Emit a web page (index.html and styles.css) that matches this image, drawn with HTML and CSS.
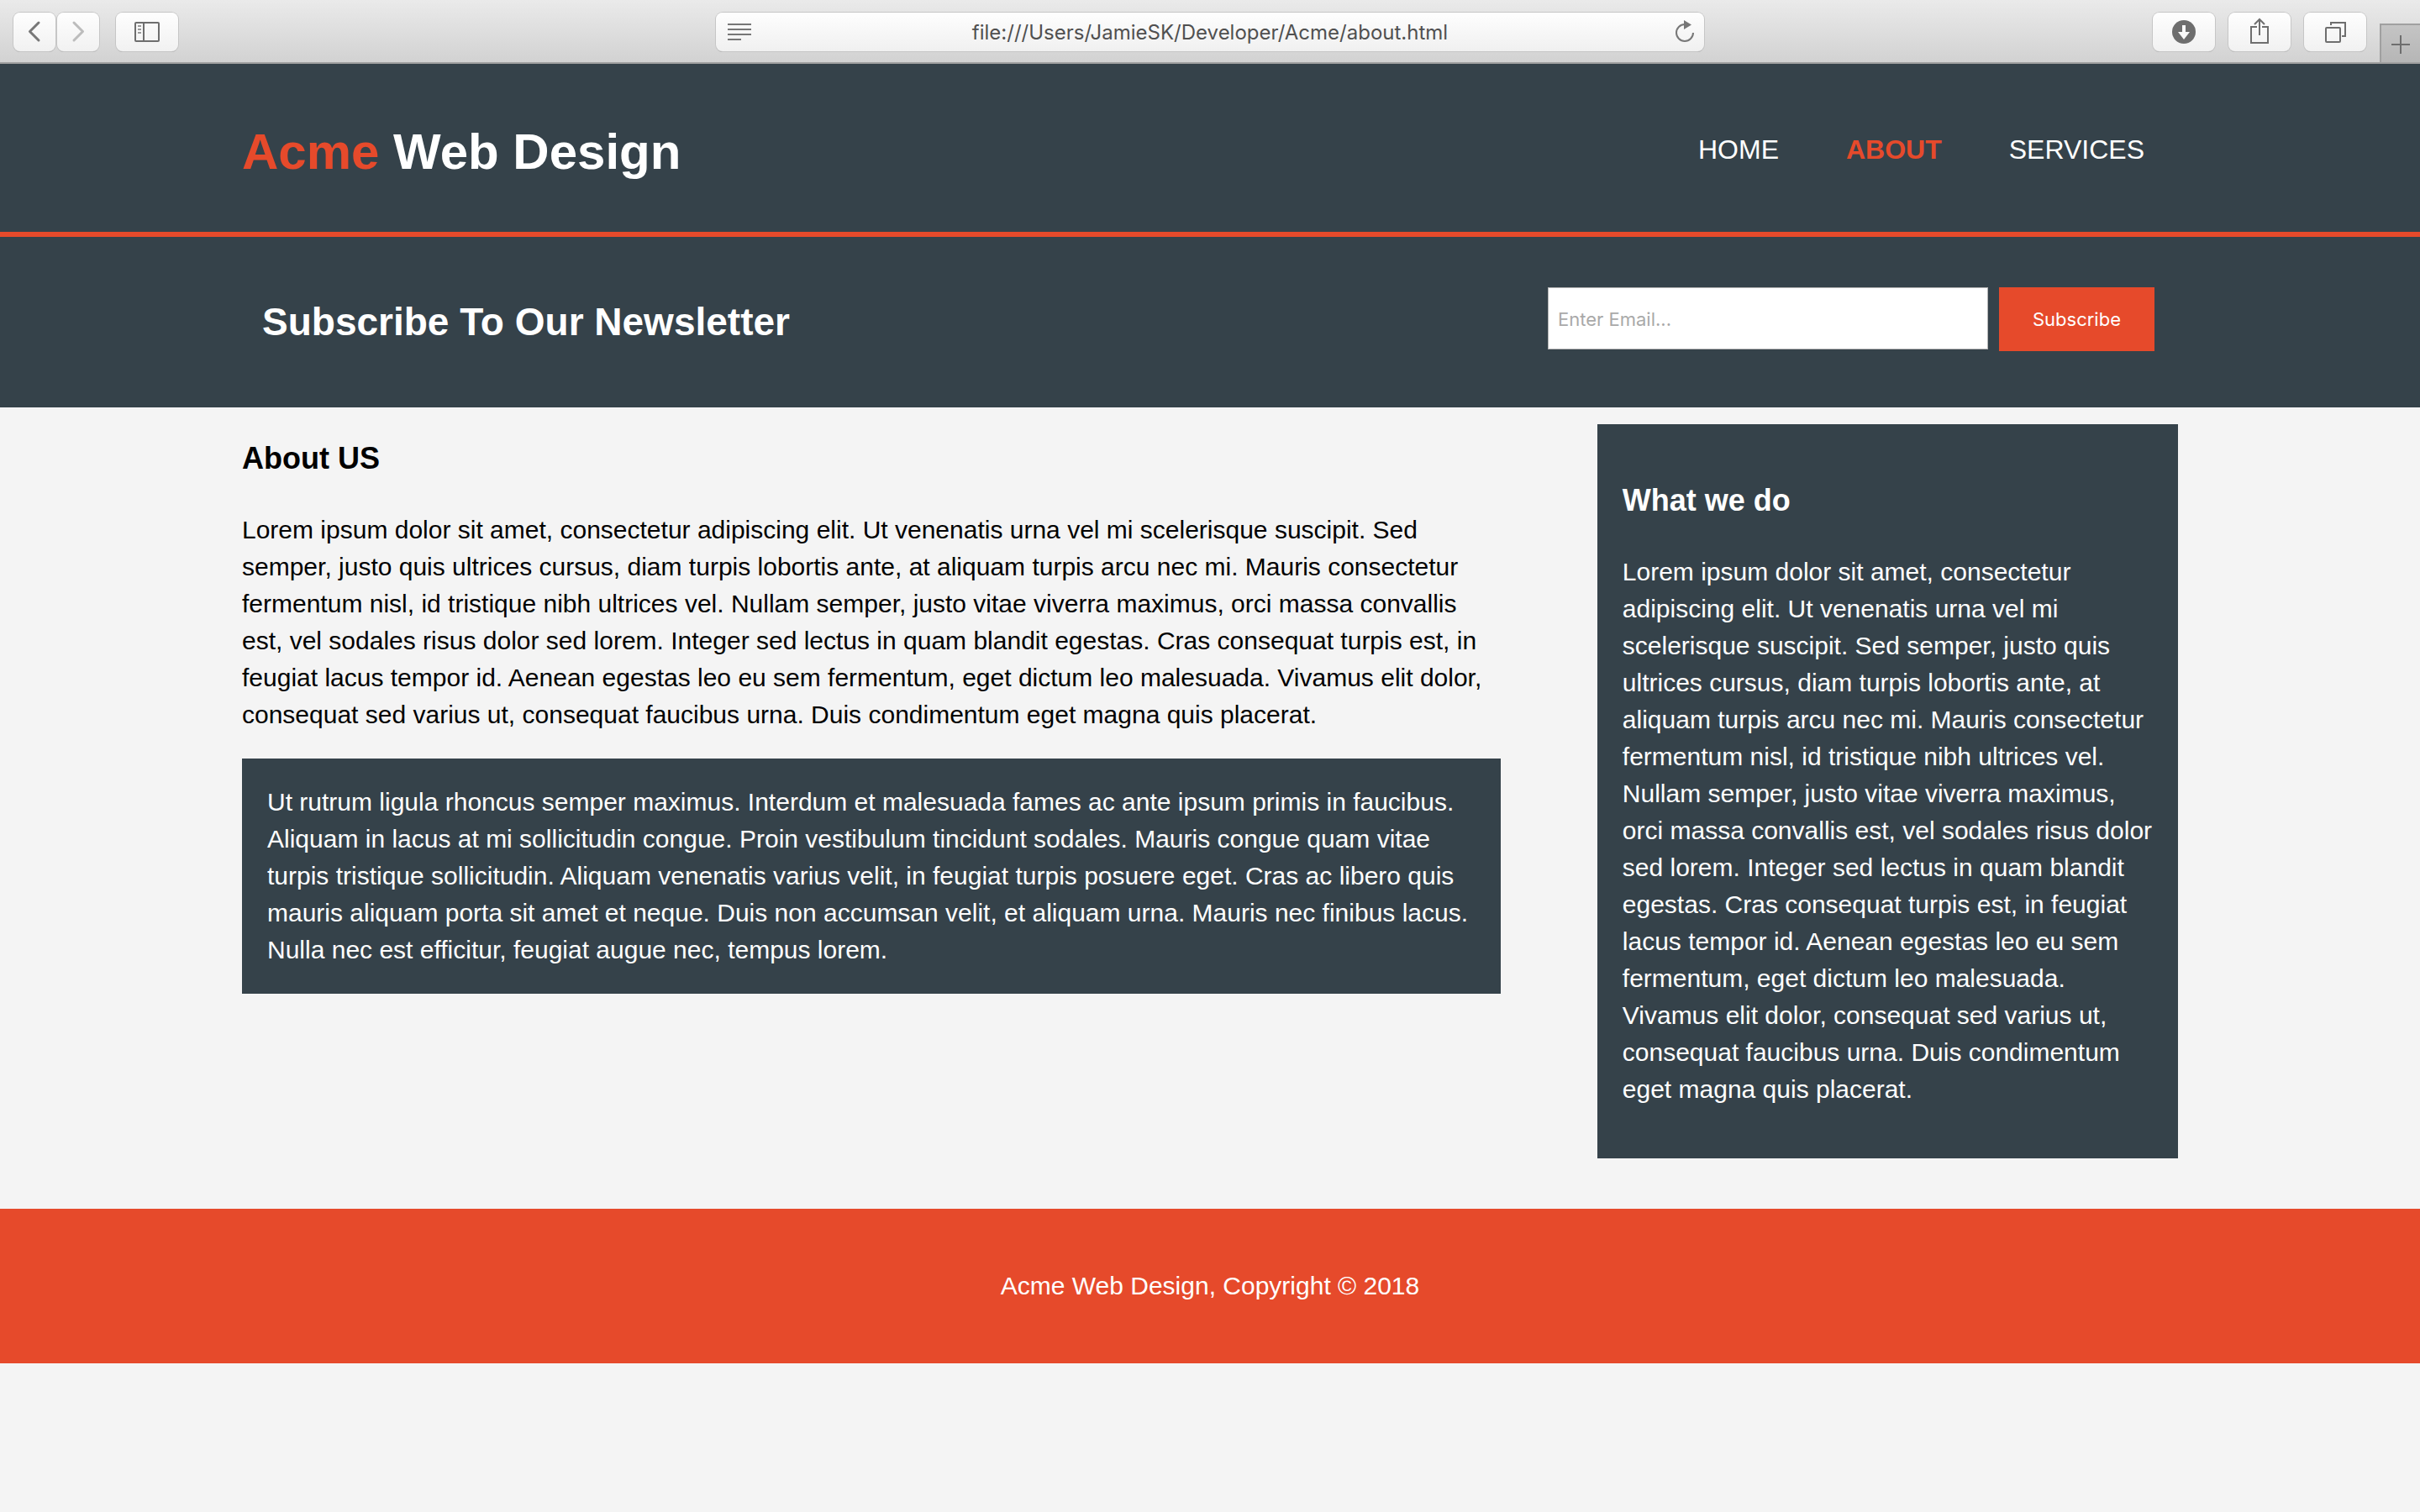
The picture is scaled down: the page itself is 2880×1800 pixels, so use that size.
FILE: index.html
```html
<!DOCTYPE html>
<html lang="en">
<head>
  <meta charset="utf-8">
  <meta name="viewport" content="width=device-width">
  <title>Acme Web Design | About</title>
  <link rel="stylesheet" href="styles.css">
</head>
<body>
  <div class="toolbar">
    <div class="tools">
      <div class="history">
        <button class="tool tool-small" type="button" aria-label="Back">
          <svg width="50" height="46" viewBox="0 0 50 46"><path d="M30 12 19.500 22.500 30 33" fill="none" stroke="#777" stroke-width="3" stroke-linecap="round" stroke-linejoin="round"/></svg>
        </button>
        <button class="tool tool-small" type="button" aria-label="Forward">
          <svg width="50" height="46" viewBox="0 0 50 46"><path d="M20 12 30.500 22.500 20 33" fill="none" stroke="#bcbcbc" stroke-width="3" stroke-linecap="round" stroke-linejoin="round"/></svg>
        </button>
      </div>
      <button class="tool" type="button" aria-label="Show sidebar">
        <svg width="74" height="46" viewBox="0 0 74 46" fill="none" stroke="#6e6e6e" stroke-width="2"><rect x="23" y="12" width="28" height="22" rx="1"/><path d="M33 12V34"/><path d="M26 16h4M26 20h4M26 24h4" stroke="#999"/></svg>
      </button>
    </div>
    <div class="address">
      <svg width="28" height="22" viewBox="0 0 28 22" stroke="#777" stroke-width="2"><path d="M0 2h28M0 8h28M0 14h28M0 20h16"/></svg>
      <input class="address-text" type="text" aria-label="Address" value="file:///Users/JamieSK/Developer/Acme/about.html">
      <button class="reload" type="button" aria-label="Reload">
        <svg width="28" height="30" viewBox="0 0 28 30"><path d="M25 16A10 10 0 1 1 15 6" fill="none" stroke="#777" stroke-width="2"/><path d="M14 1v11l9-5.500z" fill="#777"/></svg>
      </button>
    </div>
    <div class="tools tools-right">
      <button class="tool" type="button" aria-label="Downloads">
        <svg width="74" height="46" viewBox="0 0 74 46"><circle cx="37" cy="23" r="14" fill="#6e6e6e"/><path d="M35 15h4v8h5l-7 9-7-9h5z" fill="#fafafa"/></svg>
      </button>
      <button class="tool" type="button" aria-label="Share">
        <svg width="74" height="46" viewBox="0 0 74 46" fill="none" stroke="#6e6e6e" stroke-width="2"><path d="M34 17H27V36H47V17H40M37 27V9M31 14l6-6 6 6"/></svg>
      </button>
      <button class="tool" type="button" aria-label="Show all tabs">
        <svg width="74" height="46" viewBox="0 0 74 46" fill="none" stroke="#6e6e6e" stroke-width="2"><rect x="26" y="18" width="17" height="17" rx="1"/><path d="M32 15V12H49V28H45"/></svg>
      </button>
      <button class="new-tab" type="button" aria-label="New tab">
        <svg width="22" height="22" viewBox="0 0 22 22" stroke="#6e6e6e" stroke-width="2"><path d="M11 0V22M0 11H22"/></svg>
      </button>
    </div>
  </div>

  <header class="site-header">
    <div class="container header-row">
      <h1 class="brand"><span class="highlight">Acme</span> Web Design</h1>
      <nav>
        <ul class="menu">
          <li><a href="index.html">HOME</a></li>
          <li><a class="current" href="about.html">ABOUT</a></li>
          <li><a href="services.html">SERVICES</a></li>
        </ul>
      </nav>
    </div>
  </header>

  <section class="newsletter">
    <div class="container newsletter-row">
      <h1>Subscribe To Our Newsletter</h1>
      <form class="signup">
        <input type="email" aria-label="Email" placeholder="Enter Email...">
        <button type="submit">Subscribe</button>
      </form>
    </div>
  </section>

  <main class="container columns">
    <article class="about">
      <h2>About US</h2>
      <p>Lorem ipsum dolor sit amet, consectetur adipiscing elit. Ut venenatis urna vel mi scelerisque suscipit. Sed semper, justo quis ultrices cursus, diam turpis lobortis ante, at aliquam turpis arcu nec mi. Mauris consectetur fermentum nisl, id tristique nibh ultrices vel. Nullam semper, justo vitae viverra maximus, orci massa convallis est, vel sodales risus dolor sed lorem. Integer sed lectus in quam blandit egestas. Cras consequat turpis est, in feugiat lacus tempor id. Aenean egestas leo eu sem fermentum, eget dictum leo malesuada. Vivamus elit dolor, consequat sed varius ut, consequat faucibus urna. Duis condimentum eget magna quis placerat.</p>
      <p class="dark">Ut rutrum ligula rhoncus semper maximus. Interdum et malesuada fames ac ante ipsum primis in faucibus. Aliquam in lacus at mi sollicitudin congue. Proin vestibulum tincidunt sodales. Mauris congue quam vitae turpis tristique sollicitudin. Aliquam venenatis varius velit, in feugiat turpis posuere eget. Cras ac libero quis mauris aliquam porta sit amet et neque. Duis non accumsan velit, et aliquam urna. Mauris nec finibus lacus. Nulla nec est efficitur, feugiat augue nec, tempus lorem.</p>
    </article>
    <aside class="dark services">
      <h2>What we do</h2>
      <p>Lorem ipsum dolor sit amet, consectetur adipiscing elit. Ut venenatis urna vel mi scelerisque suscipit. Sed semper, justo quis ultrices cursus, diam turpis lobortis ante, at aliquam turpis arcu nec mi. Mauris consectetur fermentum nisl, id tristique nibh ultrices vel. Nullam semper, justo vitae viverra maximus, orci massa convallis est, vel sodales risus dolor sed lorem. Integer sed lectus in quam blandit egestas. Cras consequat turpis est, in feugiat lacus tempor id. Aenean egestas leo eu sem fermentum, eget dictum leo malesuada. Vivamus elit dolor, consequat sed varius ut, consequat faucibus urna. Duis condimentum eget magna quis placerat.</p>
    </aside>
  </main>

  <footer class="site-footer">
    <p>Acme Web Design, Copyright © 2018</p>
  </footer>
</body>
</html>
```
FILE: styles.css
```css
* {
  box-sizing: border-box;
}

body {
  margin: 0;
  background: #f4f4f4;
  color: #000;
  font: 30px/44px "Liberation Sans", Arial, Helvetica, sans-serif;
}

button,
input {
  font-family: Inter, sans-serif;
}

svg {
  display: block;
}

/* Browser toolbar */
.toolbar {
  display: grid;
  grid-template-columns: 1fr minmax(0, 1176px) 1fr;
  align-items: start;
  height: 76px;
  border-bottom: 2px solid #a0a0a0;
  background: linear-gradient(#eaeaea, #d2d2d2);
}

.tools {
  display: flex;
  gap: 20px;
  padding: 15px 0 0 16px;
}

.history {
  display: flex;
  gap: 2px;
}

.tool {
  width: 74px;
  height: 46px;
  padding: 0;
  border: 0;
  border-radius: 8px;
  background: linear-gradient(#fefefe, #f1f1f1);
  box-shadow: 0 0 0 1px #c6c6c6, 0 1px 0 0 #a8a8a8;
}

.tool-small {
  width: 50px;
}

.address {
  display: flex;
  align-items: center;
  height: 46px;
  margin-top: 15px;
  padding: 0 10px 0 14px;
  border-radius: 8px;
  background: linear-gradient(#fefefe, #f0f0f0);
  box-shadow: 0 0 0 1px #c6c6c6, 0 1px 0 0 #a0a0a0;
}

.address-text {
  flex: 1;
  min-width: 0;
  padding: 2px 4px 0 0;
  border: 0;
  background: none;
  color: #505050;
  font-size: 24px;
  line-height: 32px;
  text-align: center;
}

.reload {
  padding: 0;
  border: 0;
  background: none;
}

.tools-right {
  gap: 16px;
  justify-content: flex-end;
  padding-left: 0;
}

.new-tab {
  display: grid;
  place-items: center;
  width: 48px;
  height: 46px;
  margin-top: 13px;
  padding: 2px 0 0;
  border: 0 solid #a0a0a0;
  border-width: 2px 0 0 2px;
  background: linear-gradient(#c4c4c4, #b6b6b6);
}

/* Site */
.container {
  width: 80%;
  margin: 0 auto;
}

.site-header {
  min-height: 206px;
  padding-top: 60px;
  border-bottom: 6px solid #e64a2b;
  background: #35424a;
  color: #fff;
}

.header-row {
  display: flex;
  justify-content: space-between;
}

.brand {
  margin: 0;
  font-size: 60px;
  line-height: 90px;
}

.highlight,
.menu .current {
  color: #e64a2b;
  font-weight: bold;
}

.menu {
  display: flex;
  gap: 80px;
  margin: 18px 0 0;
  padding: 0 40px;
  list-style: none;
  font-size: 32px;
  line-height: 48px;
}

.menu a {
  color: #fff;
  text-decoration: none;
}

.newsletter {
  padding: 60px 0 67px;
  background: #35424a;
  color: #fff;
}

.newsletter-row {
  display: flex;
  justify-content: space-between;
  padding: 0 28px 0 24px;
}

.newsletter h1 {
  margin: 0;
  padding-top: 6px;
  font-size: 46px;
  line-height: 70px;
}

.signup {
  display: flex;
  align-items: flex-start;
  gap: 13px;
}

.signup input {
  width: 524px;
  height: 74px;
  padding: 2px 11px 0;
  border: 1px solid #b4b4b4;
  background: #fff;
  font-size: 22px;
}

.signup input::placeholder {
  color: #a9a9a9;
}

.signup button {
  height: 76px;
  padding: 0 40px;
  border: 0;
  background: #e64a2b;
  color: #fff;
  font-size: 22px;
}

.columns {
  display: flex;
  justify-content: space-between;
  align-items: flex-start;
}

.about {
  width: 65%;
}

.services {
  width: 30%;
  margin: 20px 0 60px;
}

h2 {
  margin: 35px 0 37px;
  font-size: 36px;
  line-height: 52px;
}

p {
  margin: 30px 0;
}

.dark {
  padding: 30px;
  background: #35424a;
  color: #fff;
}

.site-footer {
  padding: 40px;
  background: #e64a2b;
  color: #fff;
  text-align: center;
}
```
